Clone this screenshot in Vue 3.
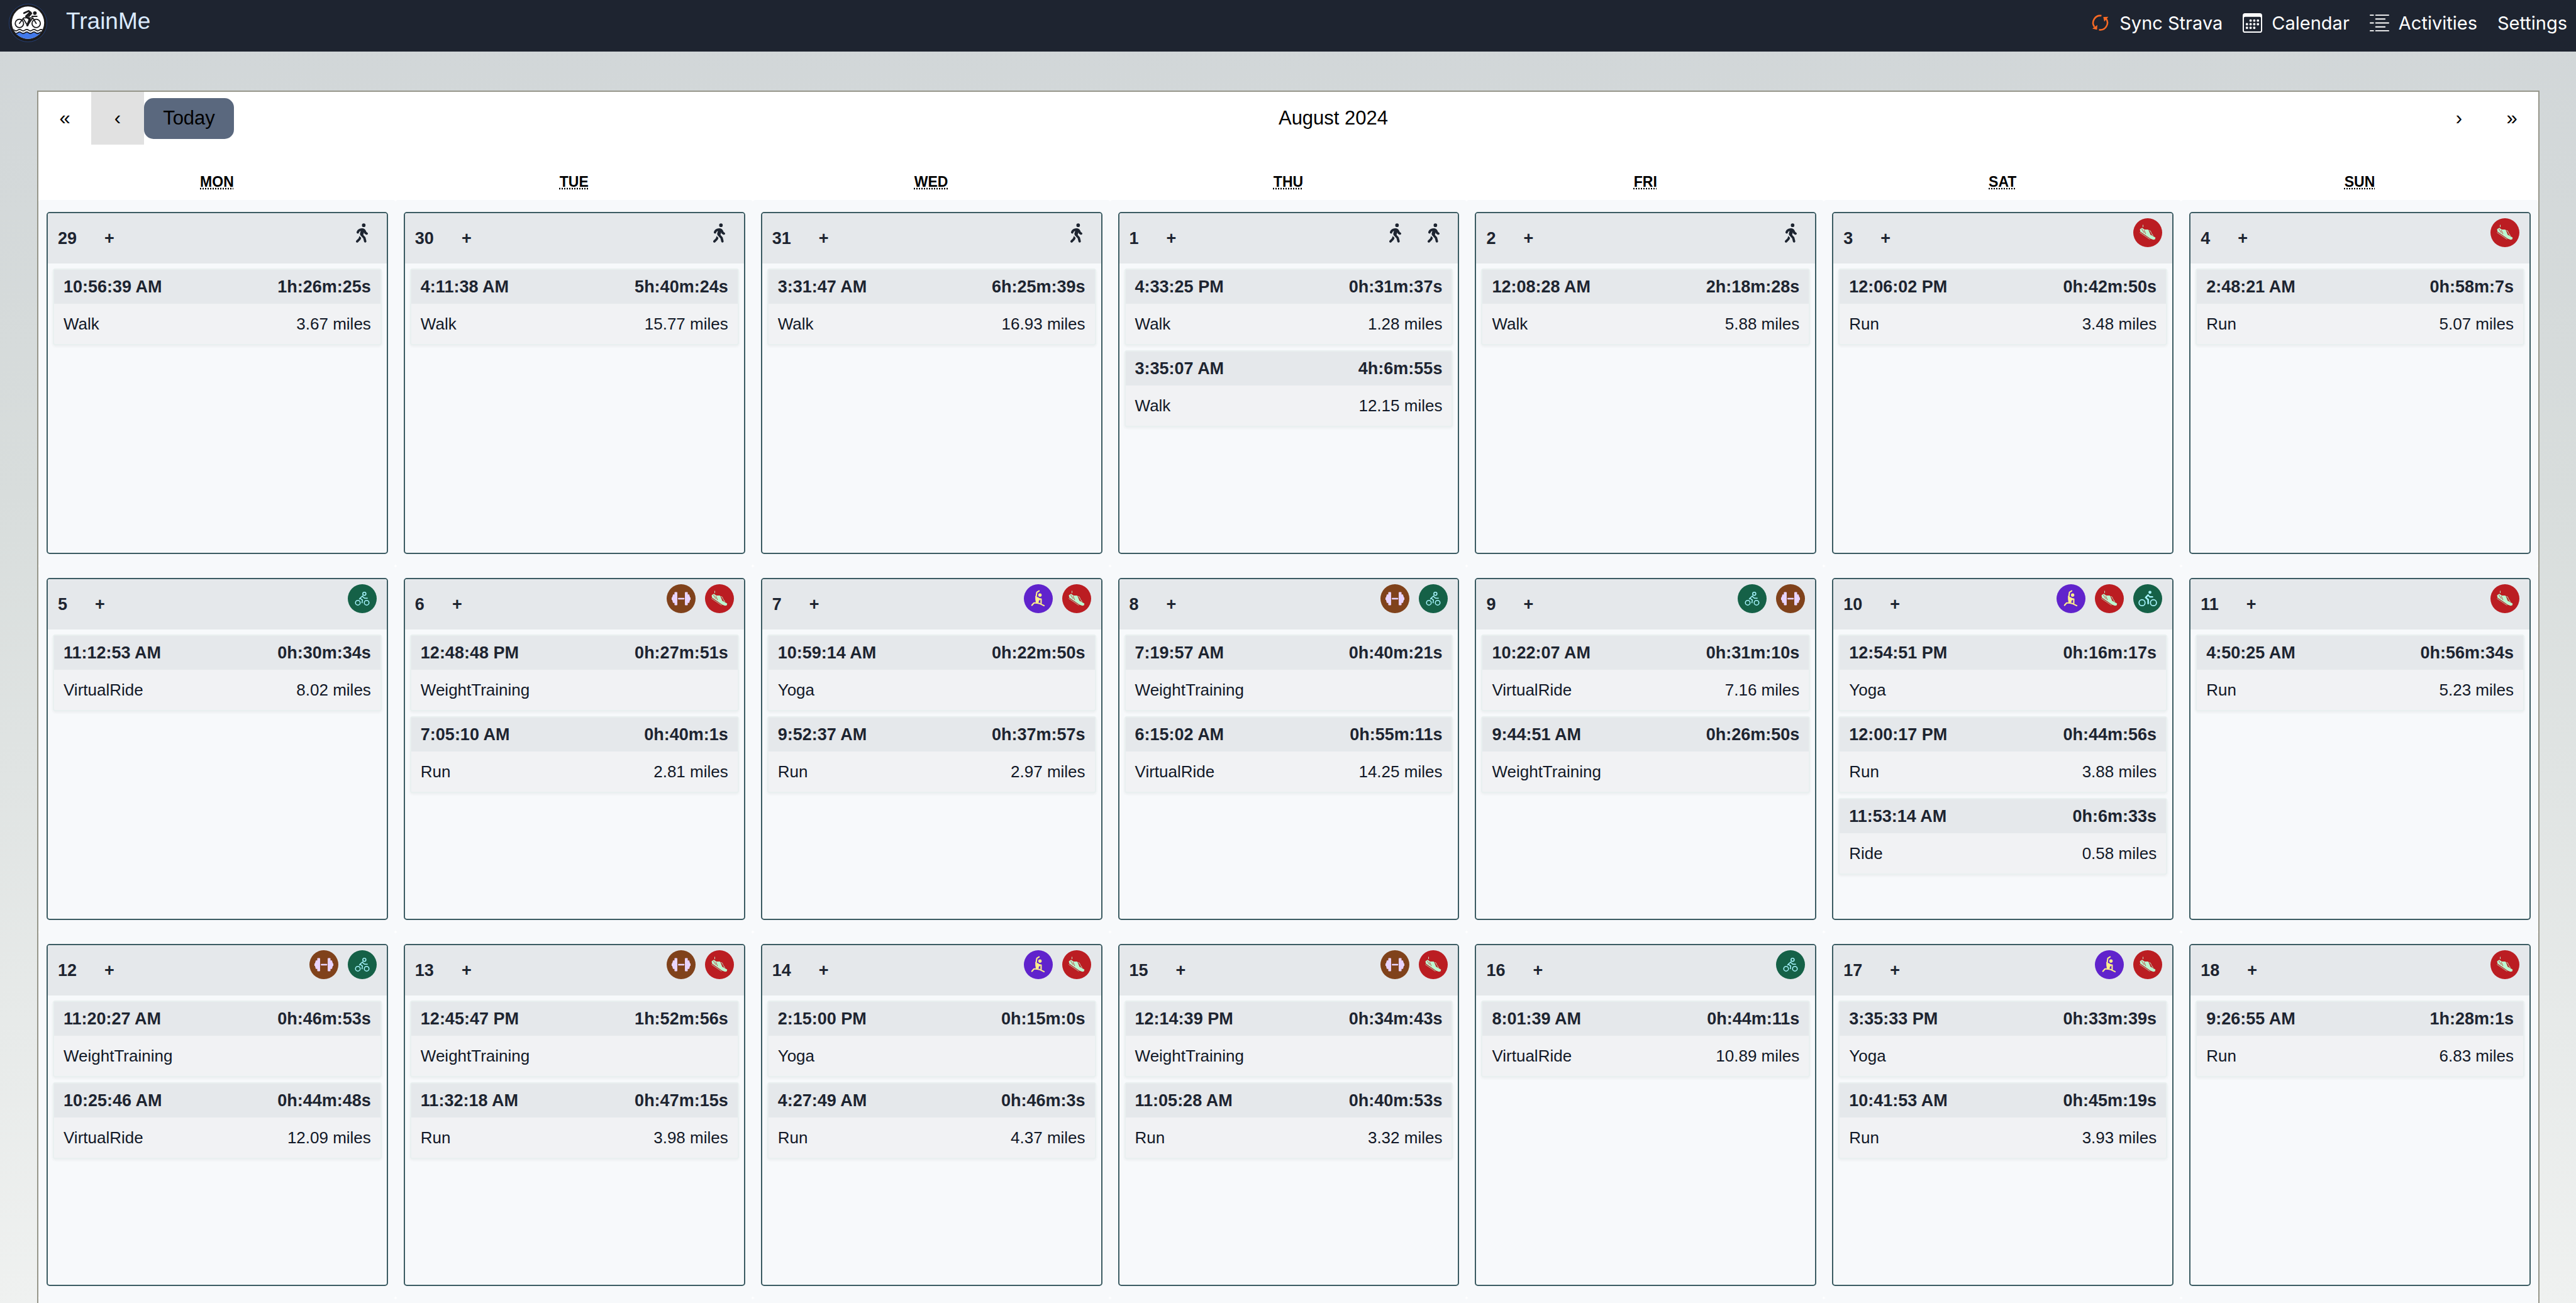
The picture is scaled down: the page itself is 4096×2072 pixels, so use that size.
<script setup>
const weekdays = [
  ['MON', 'Monday'], ['TUE', 'Tuesday'], ['WED', 'Wednesday'], ['THU', 'Thursday'],
  ['FRI', 'Friday'], ['SAT', 'Saturday'], ['SUN', 'Sunday'],
]

const ev = (time, duration, type, distance = '') => ({ time, duration, type, distance })

const days = [
  { day: 29, events: [ev('10:56:39 AM', '1h:26m:25s', 'Walk', '3.67 miles')] },
  { day: 30, events: [ev('4:11:38 AM', '5h:40m:24s', 'Walk', '15.77 miles')] },
  { day: 31, events: [ev('3:31:47 AM', '6h:25m:39s', 'Walk', '16.93 miles')] },
  { day: 1, events: [ev('4:33:25 PM', '0h:31m:37s', 'Walk', '1.28 miles'), ev('3:35:07 AM', '4h:6m:55s', 'Walk', '12.15 miles')] },
  { day: 2, events: [ev('12:08:28 AM', '2h:18m:28s', 'Walk', '5.88 miles')] },
  { day: 3, events: [ev('12:06:02 PM', '0h:42m:50s', 'Run', '3.48 miles')] },
  { day: 4, events: [ev('2:48:21 AM', '0h:58m:7s', 'Run', '5.07 miles')] },
  { day: 5, events: [ev('11:12:53 AM', '0h:30m:34s', 'VirtualRide', '8.02 miles')] },
  { day: 6, events: [ev('12:48:48 PM', '0h:27m:51s', 'WeightTraining'), ev('7:05:10 AM', '0h:40m:1s', 'Run', '2.81 miles')] },
  { day: 7, events: [ev('10:59:14 AM', '0h:22m:50s', 'Yoga'), ev('9:52:37 AM', '0h:37m:57s', 'Run', '2.97 miles')] },
  { day: 8, events: [ev('7:19:57 AM', '0h:40m:21s', 'WeightTraining'), ev('6:15:02 AM', '0h:55m:11s', 'VirtualRide', '14.25 miles')] },
  { day: 9, events: [ev('10:22:07 AM', '0h:31m:10s', 'VirtualRide', '7.16 miles'), ev('9:44:51 AM', '0h:26m:50s', 'WeightTraining')] },
  { day: 10, events: [ev('12:54:51 PM', '0h:16m:17s', 'Yoga'), ev('12:00:17 PM', '0h:44m:56s', 'Run', '3.88 miles'), ev('11:53:14 AM', '0h:6m:33s', 'Ride', '0.58 miles')] },
  { day: 11, events: [ev('4:50:25 AM', '0h:56m:34s', 'Run', '5.23 miles')] },
  { day: 12, events: [ev('11:20:27 AM', '0h:46m:53s', 'WeightTraining'), ev('10:25:46 AM', '0h:44m:48s', 'VirtualRide', '12.09 miles')] },
  { day: 13, events: [ev('12:45:47 PM', '1h:52m:56s', 'WeightTraining'), ev('11:32:18 AM', '0h:47m:15s', 'Run', '3.98 miles')] },
  { day: 14, events: [ev('2:15:00 PM', '0h:15m:0s', 'Yoga'), ev('4:27:49 AM', '0h:46m:3s', 'Run', '4.37 miles')] },
  { day: 15, events: [ev('12:14:39 PM', '0h:34m:43s', 'WeightTraining'), ev('11:05:28 AM', '0h:40m:53s', 'Run', '3.32 miles')] },
  { day: 16, events: [ev('8:01:39 AM', '0h:44m:11s', 'VirtualRide', '10.89 miles')] },
  { day: 17, events: [ev('3:35:33 PM', '0h:33m:39s', 'Yoga'), ev('10:41:53 AM', '0h:45m:19s', 'Run', '3.93 miles')] },
  { day: 18, events: [ev('9:26:55 AM', '1h:28m:1s', 'Run', '6.83 miles')] },
]
</script>

<template>
  <div class="page">
    <header class="topbar">
      <a class="brand" href="#">
        <svg class="logo" viewBox="0 0 64 64" aria-hidden="true">
          <defs>
            <clipPath id="logo-disc"><circle cx="32" cy="31.5" r="27" /></clipPath>
          </defs>
          <circle cx="32" cy="32" r="31.5" fill="#1b1b1d" stroke="#27498f" stroke-width="0.8" />
          <g clip-path="url(#logo-disc)">
            <rect width="64" height="64" fill="#fff" />
            <rect y="48" width="64" height="16" fill="#4279ea" />
            <g fill="none" stroke="#1b1b1d" stroke-width="1.8">
              <path d="M3 44q3-2.4 6 0t6 0 6 0 6 0 6 0 6 0 6 0 6 0 6 0 6 0" />
              <path d="M3 48.4q3-2.4 6 0t6 0 6 0 6 0 6 0 6 0 6 0 6 0 6 0 6 0" />
            </g>
          </g>
          <g fill="none" stroke="#1b1b1d" stroke-width="1.9" stroke-linecap="round" stroke-linejoin="round">
            <circle cx="17.7" cy="32.8" r="7" />
            <circle cx="45.7" cy="32.8" r="7" />
            <path d="M17.7 32.8 24 24.5 31 36 40 23.5H25M40 23.5 45.7 32.8M38.500 21H47" />
            <path d="M25.500 15.500 33 12 37.500 16 33.500 20.500" stroke-width="3" />
            <path d="M36 14.500 29 21 35 26 31 36" stroke-width="3.600" />
          </g>
          <circle cx="43.5" cy="15.5" r="3" fill="#1b1b1d" />
        </svg>
        <span class="brand-name">TrainMe</span>
      </a>
      <nav class="menu">
        <a href="#">
          <svg class="menu-icon" viewBox="0 0 32 32" aria-hidden="true">
            <g fill="none" stroke="#fb6a24" stroke-width="2.6">
              <path d="M18 4.200A11.700 11.700 0 0 0 6.500 22.500" />
              <path d="M14 27.200A11.700 11.700 0 0 0 25.500 8.800" />
            </g>
            <path d="M21 6.300 29.300 6 22.700 14zM3 25.300 11.300 19.300 10.700 27z" fill="#fb6a24" />
          </svg>
          Sync Strava
        </a>
        <a href="#">
          <svg class="menu-icon" viewBox="0 0 16 16" fill="currentColor" aria-hidden="true">
            <path d="M14 0H2a2 2 0 0 0-2 2v12a2 2 0 0 0 2 2h12a2 2 0 0 0 2-2V2a2 2 0 0 0-2-2M1 3.857C1 3.384 1.448 3 2 3h12c.552 0 1 .384 1 .857v10.286c0 .473-.448.857-1 .857H2c-.552 0-1-.384-1-.857z" />
            <path d="M6.500 7a1 1 0 1 0 0-2 1 1 0 0 0 0 2m3 0a1 1 0 1 0 0-2 1 1 0 0 0 0 2m3 0a1 1 0 1 0 0-2 1 1 0 0 0 0 2m-9 3a1 1 0 1 0 0-2 1 1 0 0 0 0 2m3 0a1 1 0 1 0 0-2 1 1 0 0 0 0 2m3 0a1 1 0 1 0 0-2 1 1 0 0 0 0 2m3 0a1 1 0 1 0 0-2 1 1 0 0 0 0 2m-9 3a1 1 0 1 0 0-2 1 1 0 0 0 0 2m3 0a1 1 0 1 0 0-2 1 1 0 0 0 0 2m3 0a1 1 0 1 0 0-2 1 1 0 0 0 0 2" />
          </svg>
          Calendar
        </a>
        <a href="#">
          <svg class="menu-icon" viewBox="0 0 32 32" aria-hidden="true">
            <g fill="none" stroke="currentColor" stroke-width="2" stroke-linecap="round">
              <path d="M1 3.200H6M10 3.200H31M10 9.500H25M1 16H6M10 16H31M10 22.500H25M1 28.800H6M10 28.800H31" />
            </g>
          </svg>
          Activities
        </a>
        <a href="#">Settings</a>
      </nav>
    </header>

    <main class="calendar">
      <div class="navigation">
        <button class="arrow" type="button" aria-label="Previous year">«</button>
        <button class="arrow hovered" type="button" aria-label="Previous month">‹</button>
        <button class="today" type="button">Today</button>
        <button class="month" type="button">August 2024</button>
        <button class="arrow" type="button" aria-label="Next month">›</button>
        <button class="arrow" type="button" aria-label="Next year">»</button>
      </div>

      <div class="weekdays">
        <div v-for="[short, full] in weekdays" :key="short" class="weekday">
          <abbr :title="full">{{ short }}</abbr>
        </div>
      </div>

      <div class="days">
        <div v-for="d in days" :key="d.day" class="tile">
          <section class="day">
            <div class="day-head">
              <span class="day-number">{{ d.day }}</span>
              <button class="add" type="button">+</button>
              <span class="badges">
                <span v-for="e in d.events" :key="e.time" class="badge" :class="e.type.toLowerCase()">
                  <svg v-if="e.type === 'Walk'" class="walker" viewBox="0 0 320 512" fill="currentColor" aria-hidden="true">
                    <path d="M160 48a48 48 0 1 1 96 0 48 48 0 1 1 -96 0zM126.500 199.300c-1 .4-1.900 .8-2.900 1.200l-8 3.500c-16.400 7.300-29 21.200-34.700 38.200l-2.600 7.800c-5.600 16.800-23.700 25.800-40.500 20.200s-25.800-23.700-20.200-40.500l2.600-7.800c11.400-34.100 36.600-61.900 69.400-76.500l8-3.500c20.800-9.200 43.300-14 66.100-14c44.600 0 84.800 26.800 101.900 67.900L281 232.700l21.400 10.700c15.800 7.900 22.200 27.100 14.300 42.900s-27.100 22.200-42.900 14.300L247 287.300c-10.300-5.200-18.400-13.800-22.800-24.500l-9.600-23-19.300 65.500 49.500 54c5.400 5.900 9.200 13 11.200 20.800l23 92.100c4.300 17.100-6.100 34.500-23.300 38.800s-34.500-6.100-38.800-23.300l-22-88.100-70.700-77.100c-14.800-16.100-20.300-38.600-14.700-59.700l16.900-63.500zM68.700 398l25-62.400c2.100 3 4.500 5.800 7 8.600l40.700 44.400-14.500 36.200c-2.400 6-6 11.500-10.600 16.100L54.600 502.600c-12.500 12.500-32.800 12.500-45.300 0s-12.500-32.800 0-45.300L68.700 398z" />
                  </svg>
                  <svg v-else-if="e.type === 'Run'" viewBox="0 0 48 48" aria-hidden="true">
                    <path d="M11 18.200 14.700 16 18.600 18.900 24.300 18.800 26.600 20.500 28.500 27 36.800 32 36.300 34.900 33.500 35.800 28.500 34 11.600 22.300z" fill="#bbf7d0" />
                    <path d="M16.200 11V14.700M27.300 20 30 24M29.800 24.600 33 29" fill="none" stroke="#bbf7d0" stroke-width="1" />
                    <path d="M11 23.200 28.300 35.200M14 17.800 18 24M18 19.800 20.800 26.300M26 20.500 29.800 28.200" fill="none" stroke="#bb1d22" stroke-width="0.800" />
                    <path d="M10.800 23.600 27.500 35" fill="none" stroke="#bbf7d0" stroke-width="0.800" />
                  </svg>
                  <svg v-else-if="e.type === 'WeightTraining'" viewBox="0 0 48 48" fill="#e9d5ff" aria-hidden="true">
                    <path d="M14.200 13h2.500a1 1 0 0 1 1 1v20a1 1 0 0 1-1 1h-2.500a1.200 1.200 0 0 1-1.200-1.200V31h-1.800a1 1 0 0 1-1-1v-1.500H9.500V26H8.300v-4h1.200v-2.500h.7V18a1 1 0 0 1 1-1H13v-2.800A1.200 1.200 0 0 1 14.200 13z" />
                    <path d="M33.800 13h-2.500a1 1 0 0 0-1 1v20a1 1 0 0 0 1 1h2.500a1.200 1.200 0 0 0 1.200-1.200V31h1.800a1 1 0 0 0 1-1v-1.500h.7V26h1.200v-4h-1.200v-2.500h-.7V18a1 1 0 0 0-1-1H35v-2.800A1.200 1.200 0 0 0 33.800 13z" />
                    <rect x="19" y="22.700" width="10.300" height="2.600" rx="0.500" />
                  </svg>
                  <svg v-else-if="e.type === 'Yoga'" viewBox="0 0 48 48" aria-hidden="true">
                    <circle cx="26.700" cy="18" r="2.800" fill="#fef08a" />
                    <path d="M19 19.500 24 22 28.500 24.500 24.500 28 25 30 20 31 19 25z" fill="#fef08a" />
                    <g fill="none" stroke="#fef08a" stroke-width="2.200" stroke-linecap="round" stroke-linejoin="round">
                      <path d="M25.200 11 21.500 13.500 20.300 21" />
                      <path d="M21 31H16.800L13.300 35" />
                      <path d="M21 31 26 32 33.500 35.600" />
                      <path d="M24 24.500 28.600 24.500V31.500" />
                    </g>
                  </svg>
                  <svg v-else-if="e.type === 'Ride'" viewBox="0 0 48 48" aria-hidden="true">
                    <circle cx="27.700" cy="13.500" r="2.500" fill="#a5f3fc" />
                    <g fill="none" stroke="#a5f3fc" stroke-linejoin="round" stroke-linecap="round">
                      <g stroke-width="1.800">
                        <circle cx="14.600" cy="30.700" r="5" />
                        <circle cx="33.500" cy="30.700" r="5" />
                      </g>
                      <path d="M24.500 18.200 20.600 22 24.700 25.500V32" stroke-width="2.600" />
                      <path d="M24.500 18 27.500 21H32" stroke-width="2.200" />
                    </g>
                  </svg>
                  <svg v-else viewBox="0 0 48 48" fill="none" stroke="#a5f3fc" stroke-width="1.600" aria-hidden="true">
                    <circle cx="16.700" cy="30.700" r="3.900" />
                    <circle cx="31.300" cy="30.700" r="3.900" />
                    <circle cx="27.500" cy="16" r="2.600" />
                    <path d="M25 19 20.400 23.200 24.300 26.200 23.600 31.500M24.500 20.300 27.800 23.300H33M20.400 23.200 19 25" />
                  </svg>
                </span>
              </span>
            </div>
            <article v-for="e in d.events" :key="e.time" class="event">
              <div class="event-head"><span>{{ e.time }}</span><span>{{ e.duration }}</span></div>
              <div class="event-body"><span>{{ e.type }}</span><span>{{ e.distance }}</span></div>
            </article>
          </section>
        </div>
      </div>
      <div class="next-week"><span v-for="n in 7" :key="n"></span></div>
    </main>
  </div>
</template>

<style>
body {
  margin: 0;
}
</style>

<style scoped>
.page {
  box-sizing: border-box;
  min-height: 100vh;
  display: flex;
  flex-direction: column;
  font-family: "Liberation Sans", Arial, sans-serif;
  color: #111827;
  background: linear-gradient(to bottom, #d1d6d8, #d8dddc 38%, #eff1f0);
}

button {
  padding: 0;
  border: 0;
  background: none;
  font: inherit;
  color: inherit;
}

a {
  color: inherit;
  text-decoration: none;
}

.topbar {
  box-sizing: border-box;
  height: 82px;
  padding: 6px 14px 15px 14px;
  display: flex;
  align-items: center;
  justify-content: space-between;
  background: #1e2430;
}

.brand {
  display: flex;
  align-items: center;
  gap: 30px;
  font-size: 37px;
  line-height: 46px;
  color: #dbeafe;
}

.brand-name {
  padding-bottom: 6px;
}

.logo {
  width: 61px;
  height: 61px;
}

.menu {
  display: flex;
  gap: 32px;
  font-family: Inter, sans-serif;
  font-size: 29px;
  line-height: 40px;
  color: #fff;
}

.menu a {
  display: flex;
  align-items: center;
  gap: 15px;
}

.menu-icon {
  width: 31px;
  height: 31px;
}

.calendar {
  flex: 1;
  margin: 62px 58px 0 59px;
  display: flex;
  flex-direction: column;
  border: 2px solid #96968a;
  border-bottom: 0;
  background: #fff;
  color: #000;
}

.navigation {
  display: flex;
  align-items: center;
  height: 84px;
  margin-bottom: 30px;
  font-size: 31px;
}

.arrow {
  width: 84px;
  height: 84px;
}

.hovered {
  background: #e1e1e1;
}

.today {
  width: 143px;
  height: 65px;
  border-radius: 15px;
  background: #5a687e;
}

.month {
  flex: 1;
}

.weekdays,
.days,
.next-week {
  display: grid;
  grid-template-columns: repeat(7, 1fr);
}

.weekday {
  height: 58px;
  line-height: 58px;
  text-align: center;
  font-size: 23px;
  font-weight: bold;
}

.weekday abbr {
  text-decoration: underline dotted;
}

.tile {
  padding: 19px 12px 19px 13px;
  border-radius: 4px;
  background: #f7f9fb;
}

.next-week {
  flex: 1;
}

.next-week span {
  border-radius: 4px 4px 0 0;
  background: #f7f9fb;
}

.day {
  box-sizing: border-box;
  height: 544px;
  border: 2px solid #3b5b62;
  border-radius: 5px;
  overflow: hidden;
  color: #1d2430;
}

.day-head {
  height: 80px;
  margin-bottom: 8px;
  padding: 0 16px;
  display: flex;
  align-items: center;
  background: #e5e8eb;
  font-size: 27px;
  font-weight: bold;
}

.add {
  margin-left: 44px;
}

.badges {
  margin-left: auto;
  align-self: flex-start;
  display: flex;
  gap: 15px;
  padding-top: 8px;
}

.badge {
  width: 46px;
  height: 46px;
  display: flex;
  align-items: center;
  justify-content: center;
  border-radius: 50%;
}

.badge svg {
  width: 46px;
  height: 46px;
}

.badge .walker {
  width: 19px;
  height: 31px;
}

.run {
  background: #bb1d22;
}

.weighttraining {
  background: #80421b;
}

.yoga {
  background: #6023cc;
}

.ride,
.virtualride {
  background: #156147;
}

.event {
  box-sizing: border-box;
  height: 122px;
  margin: 0 8px 8px;
  border: 2px solid #e9f0f0;
  border-radius: 4px;
  background: #f1f2f4;
  box-shadow: 0 2px 4px rgba(0, 0, 0, 0.05);
}

.event-head,
.event-body {
  display: flex;
  justify-content: space-between;
  padding: 0 15px;
}

.event-head {
  line-height: 54px;
  background: #e5e8eb;
  font-size: 27px;
  font-weight: bold;
}

.event-body {
  line-height: 64px;
  font-size: 26px;
  color: #111827;
}
</style>
